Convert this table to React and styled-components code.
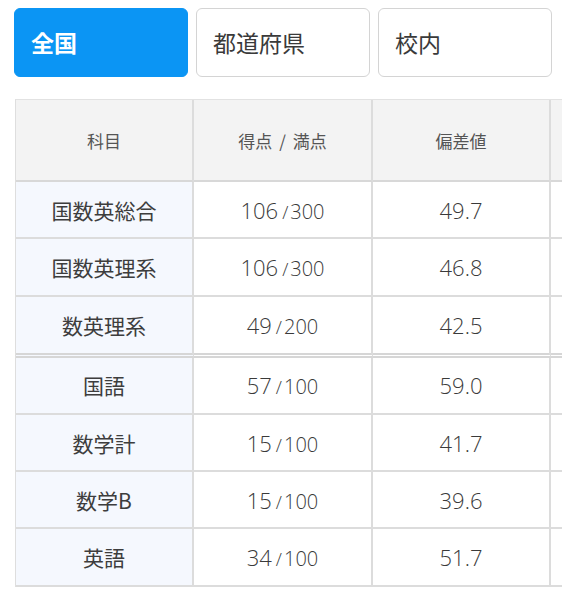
import React from "react";
import styled, { createGlobalStyle } from "styled-components";

const Global = createGlobalStyle`
  html, body { margin: 0; padding: 0; background: #fff; }
  body { font-family: "Noto Sans CJK JP", "Noto Sans", sans-serif; color: #333; }
`;

const Page = styled.div`
  padding: 8px 0 0 14px;
  width: 577px;
  box-sizing: border-box;
`;

const Tabs = styled.div`
  display: grid;
  grid-template-columns: repeat(3, 174px);
  gap: 8px;
`;

const Tab = styled.button`
  height: 69px;
  box-sizing: border-box;
  border-radius: 6px;
  border: 1px solid ${(p) => (p.$active ? "#0b95f4" : "#d4d4d4")};
  background: ${(p) => (p.$active ? "#0b95f4" : "#fff")};
  color: ${(p) => (p.$active ? "#fff" : "#3a3a3a")};
  font-family: "Noto Sans CJK JP", sans-serif;
  font-size: 23px;
  font-weight: ${(p) => (p.$active ? 700 : 400)};
  text-align: left;
  padding: 0 0 2px 16px;
  cursor: pointer;
`;

const Scroller = styled.div`
  margin-top: 22px;
  margin-left: 1px;
  width: 547px;
  overflow: hidden;
`;

const Table = styled.table`
  border-collapse: separate;
  border-spacing: 0;
  table-layout: fixed;
  width: 714px;
  border-top: 1px solid #e2e2e2;
  border-left: 1px solid #dedede;
`;

const HeadCell = styled.th`
  height: 80px;
  background: #f3f3f3;
  font-weight: 400;
  font-size: 17px;
  word-spacing: 3px;
  color: #555;
  border-right: 2px solid #dcdcdc;
  border-bottom: 2px solid #d8d8d8;
  padding: 0;
  text-align: center;
  vertical-align: middle;
`;

const Cell = styled.td`
  height: ${(p) => (p.$split ? "56px" : "55.3px")};
  padding: 0;
  text-align: center;
  vertical-align: middle;
  color: #444;
  background: ${(p) => (p.$label ? "#f5f8fe" : "#fff")};
  border-right: 2px solid #dcdcdc;
  border-bottom: ${(p) => (p.$split ? "5px double #d6d6d6" : "2px solid #dcdcdc")};
`;

const Label = styled.span`
  font-size: 21px;
  color: #3d3d3d;
`;

const Num = styled.span`
  font-family: "Open Sans", "Noto Sans", sans-serif;
  font-size: 22px;
  font-weight: 350;
  color: #3a3a3a;
`;

const ScoreSub = styled.span`
  font-family: "Open Sans", "Noto Sans", sans-serif;
  font-size: 20px;
  font-weight: 350;
  color: #3a3a3a;
  margin-left: 4px;
`;

const Slash = styled.span`
  margin-right: 2px;
  font-size: 18px;
`;

const rows = [
  { name: "国数英総合", score: "106", full: "300", dev: "49.7" },
  { name: "国数英理系", score: "106", full: "300", dev: "46.8" },
  { name: "数英理系", score: "49", full: "200", dev: "42.5", split: true },
  { name: "国語", score: "57", full: "100", dev: "59.0" },
  { name: "数学計", score: "15", full: "100", dev: "41.7" },
  { name: "数学B", score: "15", full: "100", dev: "39.6" },
  { name: "英語", score: "34", full: "100", dev: "51.7" },
];

export default function App() {
  return (
    <Page>
      <Global />
      <Tabs>
        <Tab $active>全国</Tab>
        <Tab>都道府県</Tab>
        <Tab>校内</Tab>
      </Tabs>
      <Scroller>
        <Table>
          <colgroup>
            <col style={{ width: 178 }} />
            <col style={{ width: 179 }} />
            <col style={{ width: 178 }} />
            <col style={{ width: 179 }} />
          </colgroup>
          <thead>
            <tr>
              <HeadCell>科目</HeadCell>
              <HeadCell>得点 / 満点</HeadCell>
              <HeadCell>偏差値</HeadCell>
              <HeadCell></HeadCell>
            </tr>
          </thead>
          <tbody>
            {rows.map((r) => (
              <tr key={r.name}>
                <Cell $label $split={r.split}>
                  <Label>{r.name}</Label>
                </Cell>
                <Cell $split={r.split}>
                  <Num>{r.score}</Num>
                  <ScoreSub>
                    <Slash>/</Slash>
                    {r.full}
                  </ScoreSub>
                </Cell>
                <Cell $split={r.split}>
                  <Num>{r.dev}</Num>
                </Cell>
                <Cell $split={r.split}></Cell>
              </tr>
            ))}
          </tbody>
        </Table>
      </Scroller>
    </Page>
  );
}
